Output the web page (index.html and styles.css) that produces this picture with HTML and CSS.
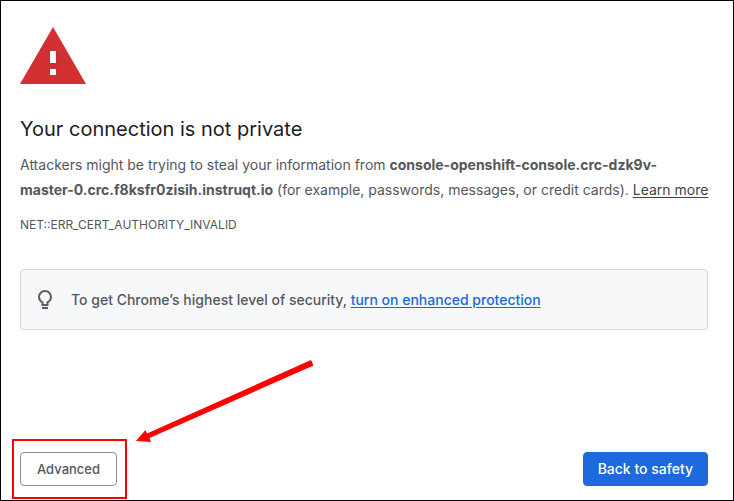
FILE: index.html
```html
<!DOCTYPE html>
<html lang="en">
<head>
<meta charset="utf-8">
<meta name="viewport" content="width=device-width, initial-scale=1">
<title>Privacy error</title>
<link rel="stylesheet" href="styles.css">
</head>
<body>
<main class="page">
  <svg class="warning-icon" viewBox="0 0 66 57" aria-hidden="true">
    <defs>
      <linearGradient id="shade" x1="33" y1="24" x2="54" y2="52" gradientUnits="userSpaceOnUse">
        <stop offset="0" stop-color="#a52a2c" stop-opacity=".75"/>
        <stop offset=".75" stop-color="#d32f31" stop-opacity="0"/>
      </linearGradient>
    </defs>
    <path d="M33 0 66 57H0z" fill="#d33033"/>
    <path d="M36 24 55 43 63 57H39L30 48H36V42L30 36H36z" fill="url(#shade)"/>
    <path d="M30 24h6v12h-6zM30 42h6v6h-6z" fill="#fff"/>
  </svg>
  <h1 class="title">Your connection is not private</h1>
  <p class="message">Attackers might be trying to steal your information from <strong>console-openshift-console.crc-dzk9v-<br>master-0.crc.f8ksfr0zisih.instruqt.io</strong> (for example, passwords, messages, or credit cards). <a class="learn-more" href="#">Learn more</a></p>
  <p class="error-code">NET::ERR_CERT_AUTHORITY_INVALID</p>
  <section class="tip">
    <svg class="bulb" viewBox="0 0 14 20" fill="none" stroke="#5a5d61" stroke-width="2" aria-hidden="true">
      <path d="M4.500 15V12.400C2.500 11.300 1 9.600 1 7a6 6 0 0 1 12 0c0 2.600-1.500 4.300-3.500 5.400V15z"/>
      <path d="M4 18h6"/>
    </svg>
    <p class="tip-text">To get Chrome’s highest level of security, <a class="tip-link" href="#">turn on enhanced protection</a></p>
  </section>
  <div class="actions">
    <div class="callout">
      <button class="button secondary" type="button">Advanced</button>
      <span class="highlight"></span>
      <svg class="arrow" viewBox="0 0 178 84" fill="#f00" aria-hidden="true">
        <path d="M175 0 177.500 5.500 13.500 78 15 82 0 81 9.500 70 11 73.500z"/>
      </svg>
    </div>
    <button class="button primary" type="button">Back to safety</button>
  </div>
</main>
</body>
</html>
```
FILE: styles.css
```css
* {
  box-sizing: border-box;
}

body {
  margin: 0;
  background: #fff;
  color: #54575b;
  font-family: Inter, "Liberation Sans", sans-serif;
  font-size: 14px;
}

.page {
  display: flex;
  flex-direction: column;
  min-height: 100vh;
  padding: 26px 25px 14px 19px;
  border: 1px solid #000;
}

.warning-icon {
  width: 66px;
  height: 57px;
}

.title {
  margin: 32px 0 10px;
  color: #202124;
  font-size: 20px;
  font-weight: 400;
  line-height: 26px;
}

.message {
  margin: 0 -12px 0 0;
  line-height: 25px;
}

.learn-more {
  color: #444;
  text-underline-offset: 2px;
}

.error-code {
  margin: 13px 0 34px;
  font-size: 12px;
  line-height: 20px;
}

.tip {
  display: flex;
  align-items: center;
  gap: 19px;
  min-height: 61px;
  padding: 12px 17px;
  border: 1px solid #d5d7dc;
  border-radius: 4px;
  background: #f7f8fa;
}

.bulb {
  width: 14px;
  height: 20px;
}

.tip-text {
  margin: 0;
  font-weight: 500;
  line-height: 24px;
}

.tip-link {
  color: #1a69de;
  text-underline-offset: 2px;
}

.actions {
  display: flex;
  justify-content: space-between;
  margin-top: auto;
}

.callout {
  position: relative;
}

.button {
  height: 34px;
  padding: 0 16px;
  border: 1px solid #8b9096;
  border-radius: 4px;
  font: 500 13px/20px Inter, "Liberation Sans", sans-serif;
}

.secondary {
  background: #fff;
  color: #54575b;
}

.primary {
  padding: 0 14px;
  border-color: #1f69df;
  background: #1f69df;
  color: #fff;
  font-size: 14px;
}

.highlight {
  position: absolute;
  inset: -13px -10px -13px -8px;
  border: 2px solid #f00;
  pointer-events: none;
}

.arrow {
  position: absolute;
  bottom: 42px;
  left: 116px;
  width: 178px;
  height: 84px;
  pointer-events: none;
}
```
